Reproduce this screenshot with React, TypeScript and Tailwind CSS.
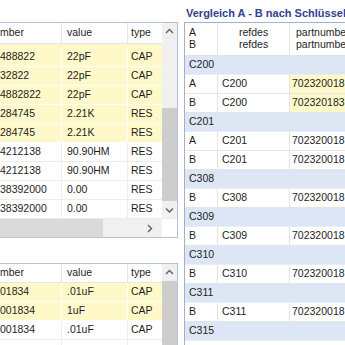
import React from 'react';

type Row = { pn: string; value: string; type: string; hl: boolean };

const topRows: Row[] = [
  { pn: '488822', value: '22pF', type: 'CAP', hl: true },
  { pn: '32822', value: '22pF', type: 'CAP', hl: true },
  { pn: '4882822', value: '22pF', type: 'CAP', hl: true },
  { pn: '284745', value: '2.21K', type: 'RES', hl: true },
  { pn: '284745', value: '2.21K', type: 'RES', hl: true },
  { pn: '4212138', value: '90.90HM', type: 'RES', hl: false },
  { pn: '4212138', value: '90.90HM', type: 'RES', hl: false },
  { pn: '38392000', value: '0.00', type: 'RES', hl: false },
  { pn: '38392000', value: '0.00', type: 'RES', hl: false },
];

const bottomRows: Row[] = [
  { pn: '01834', value: '.01uF', type: 'CAP', hl: true },
  { pn: '001834', value: '1uF', type: 'CAP', hl: true },
  { pn: '001834', value: '.01uF', type: 'CAP', hl: false },
  { pn: '', value: '', type: '', hl: false },
];

type Group = { key: string; items: { side: string; pn: string; hl: boolean }[] };

const groups: Group[] = [
  { key: 'C200', items: [{ side: 'A', pn: '702320018', hl: true }, { side: 'B', pn: '702320183', hl: true }] },
  { key: 'C201', items: [{ side: 'A', pn: '702320018', hl: false }, { side: 'B', pn: '702320018', hl: false }] },
  { key: 'C308', items: [{ side: 'B', pn: '702320018', hl: false }] },
  { key: 'C309', items: [{ side: 'B', pn: '702320018', hl: false }] },
  { key: 'C310', items: [{ side: 'B', pn: '702320018', hl: false }] },
  { key: 'C311', items: [{ side: 'B', pn: '702320018', hl: false }] },
  { key: 'C315', items: [] },
];

function Arrow({ dir }: { dir: 'up' | 'down' | 'right' }) {
  const d =
    dir === 'up' ? 'M1 5 L4.5 1.5 L8 5' : dir === 'down' ? 'M1 1.5 L4.5 5 L8 1.5' : 'M2 1 L5.5 4.5 L2 8';
  const size = dir === 'right' ? { w: 8, h: 9 } : { w: 9, h: 7 };
  return (
    <svg width={size.w} height={size.h} viewBox={`0 0 ${size.w} ${size.h}`}>
      <path d={d} fill="none" stroke="#606060" strokeWidth="1.4" />
    </svg>
  );
}

function ListRow({ row }: { row: Row }) {
  const line = row.hl ? 'border-white' : 'border-[#ececec]';
  return (
    <div className={`flex h-[19px] shrink-0 border-b ${line} ${row.hl ? 'bg-[#fff9c9]' : 'bg-white'}`}>
      <div className={`w-[62px] shrink-0 border-r ${line} flex items-center whitespace-nowrap`}>{row.pn}</div>
      <div className={`w-[66px] shrink-0 border-r ${line} flex items-center pl-[5px] whitespace-nowrap`}>{row.value}</div>
      <div className="flex-1 flex items-center pl-[3px]">{row.type}</div>
    </div>
  );
}

function ListHeader({ h }: { h: string }) {
  return (
    <div className={`flex ${h} shrink-0 border-b border-[#e5e5e5] bg-white`}>
      <div className="w-[62px] shrink-0 border-r border-[#e5e5e5] flex items-center">mber</div>
      <div className="w-[66px] shrink-0 border-r border-[#e5e5e5] flex items-center pl-[5px]">value</div>
      <div className="flex-1 flex items-center pl-[3px]">type</div>
    </div>
  );
}

export default function App() {
  return (
    <div className="w-[345px] h-[345px] overflow-hidden bg-white flex font-['Liberation_Sans',Arial,sans-serif] text-[10.5px] text-[#1e1e1e]">
      {/* left: two lists */}
      <div className="w-[178px] shrink-0 flex flex-col pt-[22px]">
        <div className="h-[216px] shrink-0 flex flex-col border-t border-r border-b border-[#b4c3d8]">
          <div className="flex h-[196px]">
            <div className="flex-1 flex flex-col overflow-hidden">
              <ListHeader h="h-[21px]" />
              <div className="h-[4px] shrink-0 bg-[#fff9c9]" />
              {topRows.map((r, i) => (
                <ListRow key={i} row={r} />
              ))}
            </div>
            <div className="w-[15px] shrink-0 flex flex-col bg-[#f0f0f0]">
              <div className="h-[17px] flex items-center justify-center">
                <Arrow dir="up" />
              </div>
              <div className="h-[68px]" />
              <div className="h-[93px] bg-[#cdcdcd]" />
              <div className="flex-1" />
              <div className="h-[17px] flex items-center justify-center">
                <Arrow dir="down" />
              </div>
            </div>
          </div>
          <div className="flex flex-1">
            <div className="w-[103px] bg-[#dadada]" />
            <div className="flex-1 bg-[#f0f0f0] flex items-center justify-end pr-[8px]">
              <Arrow dir="right" />
            </div>
            <div className="w-[15px] bg-white" />
          </div>
        </div>

        <div className="mt-[25px] flex-1 flex border-t border-r border-[#b4c3d8]">
          <div className="flex-1 flex flex-col overflow-hidden">
            <ListHeader h="h-[19px]" />
            {bottomRows.map((r, i) => (
              <ListRow key={i} row={r} />
            ))}
          </div>
          <div className="w-[15px] shrink-0 flex flex-col bg-[#f0f0f0]">
            <div className="h-[17px] flex items-center justify-center">
              <Arrow dir="up" />
            </div>
            <div className="flex-1 bg-[#cdcdcd]" />
          </div>
        </div>
      </div>

      {/* right: comparison */}
      <div className="ml-[6px] flex-1 min-w-0 flex flex-col">
        <div className="h-[22px] shrink-0 pt-[7px] pl-[2px] leading-[13px] text-[11px] font-bold text-[#32408f] whitespace-nowrap">
          Vergleich A - B nach Schlüssel
        </div>
        <div className="flex-1 flex flex-col border-l border-t border-[#9fb1cc] overflow-hidden">
          <div className="flex h-[33px] shrink-0 border-b border-[#dde3ec] bg-white leading-[12px]">
            <div className="w-[33px] shrink-0 border-r border-[#e4e4e4] pt-[3px] pl-[4px]">
              <div>A</div>
              <div>B</div>
            </div>
            <div className="w-[72px] shrink-0 border-r border-[#e4e4e4] pt-[3px] pl-[21px] whitespace-nowrap">
              <div>refdes</div>
              <div>refdes</div>
            </div>
            <div className="flex-1 pt-[3px] pl-[6px] whitespace-nowrap">
              <div>partnumber</div>
              <div>partnumber</div>
            </div>
          </div>
          {groups.map((g) => (
            <React.Fragment key={g.key}>
              <div className="h-[19px] shrink-0 bg-[#dce6f4] border-b border-[#e8eef7] flex items-center pl-[4px]">
                {g.key}
              </div>
              {g.items.map((it, i) => (
                <div key={i} className="flex h-[19px] shrink-0 border-b border-[#e4e4e4] bg-white">
                  <div className="w-[33px] shrink-0 border-r border-[#e4e4e4] flex items-center pl-[4px]">{it.side}</div>
                  <div className="w-[72px] shrink-0 border-r border-[#e4e4e4] flex items-center pl-[4px]">{g.key}</div>
                  <div className={`flex-1 flex items-center pl-[2px] whitespace-nowrap ${it.hl ? 'bg-[#fff9c9]' : ''}`}>
                    {it.pn}
                  </div>
                </div>
              ))}
            </React.Fragment>
          ))}
        </div>
      </div>
    </div>
  );
}
